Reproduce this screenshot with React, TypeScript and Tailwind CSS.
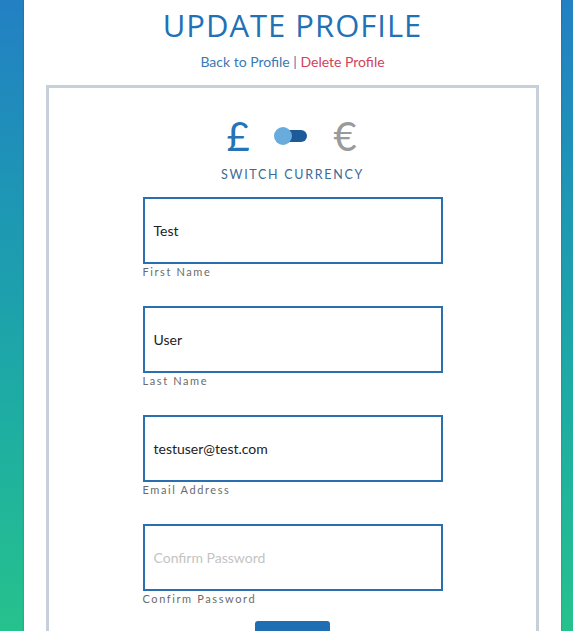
import React from "react";

const fields = [
  { value: "Test", label: "First Name", placeholder: "First Name" },
  { value: "User", label: "Last Name", placeholder: "Last Name" },
  { value: "testuser@test.com", label: "Email Address", placeholder: "Email Address" },
  { value: "", label: "Confirm Password", placeholder: "Confirm Password" },
];

export default function App() {
  return (
    <div
      className="h-[631px] w-[573px] overflow-hidden bg-gradient-to-b from-[#2380c3] to-[#26c28c] flex"
      style={{ fontFamily: 'Lato, "Open Sans", sans-serif' }}
    >
      <div className="ml-[24px] w-[537px] bg-white flex flex-col items-center shadow-[0_0_2px_rgba(0,0,0,0.25)]">
        <h1
          className="mt-[3px] text-[31px] leading-[44px] tracking-[1px] text-[#2271b6] font-medium"
          style={{ fontFamily: '"Open Sans", sans-serif' }}
        >
          UPDATE PROFILE
        </h1>
        <div className="mt-[5px] text-[14px] leading-[20px]">
          <span className="text-[#3b79b6]">Back to Profile</span>
          <span className="text-[#3b79b6]"> | </span>
          <span className="text-[#d0435c]">Delete Profile</span>
        </div>
        <div className="mt-[13px] w-[493px] flex-1 border-[3px] border-b-0 border-[#c7d0d9] flex flex-col items-center">
          <div className="mt-[28px] flex items-center h-[40px] -translate-x-[1px]">
            <span className="text-[40px] leading-[40px] text-[#2574b8] w-[24px] text-center">£</span>
            <div className="ml-[24px] relative w-[33px] h-[18px] flex items-center">
              <div className="absolute right-0 w-[26px] h-[12px] rounded-full bg-[#1d5a98]" />
              <div className="absolute left-0 w-[18px] h-[18px] rounded-full bg-[#68abdc]" />
            </div>
            <span className="ml-[26px] text-[40px] leading-[40px] text-[#9a9a9a] w-[24px] text-center">€</span>
          </div>
          <div className="mt-[10px] text-[12.5px] leading-[18px] tracking-[1.7px] text-[#3a6a96]">
            SWITCH CURRENCY
          </div>
          <div className="mt-[13px] flex flex-col gap-[26px]">
            {fields.map((f) => (
              <div key={f.label} className="flex flex-col">
                <div className="w-[300px] h-[67px] border-2 border-[#2a6fb0] flex items-center px-[9px]">
                  {f.value ? (
                    <span className="text-[14px] text-[#222]">{f.value}</span>
                  ) : (
                    <span className="text-[14px] text-[#c4c4c4]">{f.placeholder}</span>
                  )}
                </div>
                <div className="text-[11px] leading-[16px] tracking-[1.6px] text-[#6b6b6b]">
                  {f.label}
                </div>
              </div>
            ))}
          </div>
          <div className="mt-[14px] w-[75px] h-[20px] rounded-t-[3px] bg-[#1f6db3]" />
        </div>
      </div>
    </div>
  );
}
